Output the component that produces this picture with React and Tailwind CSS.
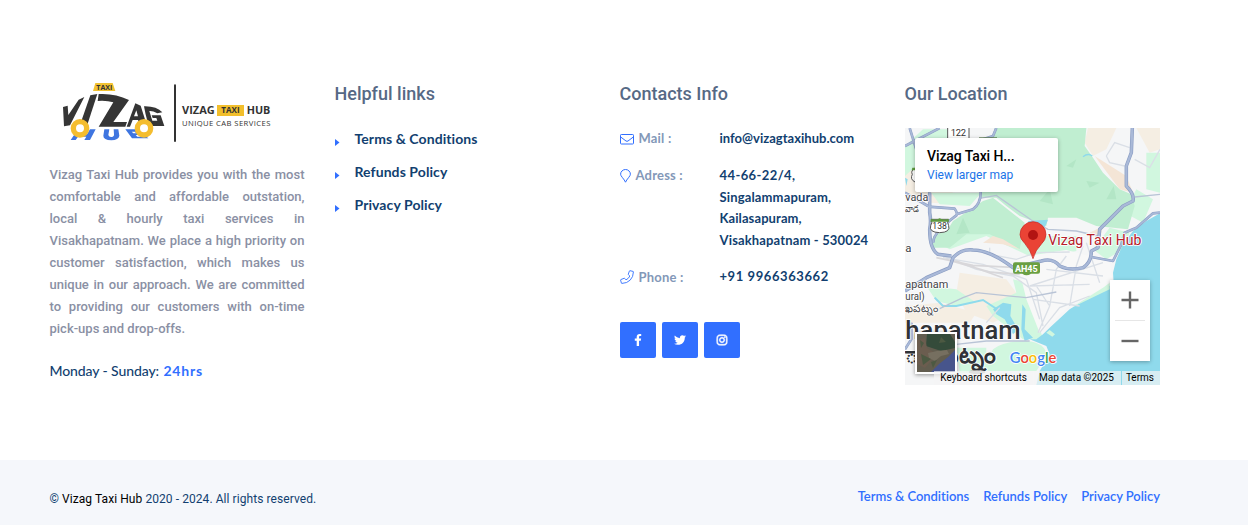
import { FaFacebookF, FaTwitter, FaInstagram } from "react-icons/fa";

function Logo() {
  return (
    <svg className="block h-[75px] w-[240px]" viewBox="0 0 720 225" role="img" aria-label="Vizag Taxi Hub">
      <g fill="#3e75e0">
        <path d="M62 195 L84 163 L98 163 L90 176 L112 176 L120 163 L137 163 L120 195 L103 195 L109 185 L84 185 L77 195Z" />
        <path d="M163 163 H178 L175 180 Q177 187 185 186 Q193 185 192 178 L191 163 H205 L208 182 Q206 195 184 196 Q160 195 160 182Z" />
        <path fillRule="evenodd" d="M226 163 H262 L295 190 H246Z M245 170 L250 175 H259 L254 170Z M257 180 L262 185 H272 L266 180Z" />
      </g>
      <g fill="#353535">
        <path d="M39 96 L53 92 L55 120 L86 74 L103 66 L60 151 L42 154Z" />
        <path d="M121 61 L142 57 L110 155 L88 155Z" />
        <path d="M146 57 Q195 54 237 75 L190 141 H231 L226 155 H146 L190 82 Q170 76 143 78Z" />
        <path fillRule="evenodd" d="M256 85 L272 92 L292 155 H273 L264 135 H248 L240 155 H230Z M259 106 L252 124 H264Z" />
        <path d="M282 94 Q320 93 337 112 L322 115 Q308 107 298 108 L307 137 H322 L319 129 H308 L305 121 H332 L343 153 H300 Q291 145 282 94Z" />
      </g>
      <circle cx="90" cy="160" r="20" fill="#fff" stroke="#f4bd2f" strokeWidth="16" />
      <circle cx="282" cy="160" r="20" fill="#fff" stroke="#f4bd2f" strokeWidth="16" />
      <path d="M136 24 H188 L196 48 H129Z" fill="#f2c230" />
      <text x="163" y="44" textAnchor="middle" textLength="48" lengthAdjust="spacingAndGlyphs" fontFamily="Open Sans" fontWeight="700" fontSize="21" fill="#333">TAXI</text>
      <rect x="372" y="28" width="6" height="173" rx="3" fill="#333" />
      <g fontFamily="Open Sans" fill="#333">
        <text x="396" y="117" textLength="98" lengthAdjust="spacingAndGlyphs" fontWeight="700" fontSize="32">VIZAG</text>
        <rect x="501" y="90" width="81" height="33" fill="#f2bf2c" />
        <text x="514" y="115" textLength="55" lengthAdjust="spacingAndGlyphs" fontWeight="700" fontSize="25">TAXI</text>
        <text x="590" y="117" textLength="71" lengthAdjust="spacingAndGlyphs" fontWeight="700" fontSize="32">HUB</text>
        <text x="396" y="153" textLength="265" fontSize="23">UNIQUE CAB SERVICES</text>
      </g>
    </svg>
  );
}

const mainRoads =
  "M80 200 V260 Q85 285 80 310 Q80 370 105 385 L145 390 M6 495 L70 455 L140 425 L150 395 Q175 368 210 372 Q260 372 330 425 L415 405 Q450 395 470 420 Q500 435 540 425 Q565 410 565 375 L585 365 L590 310 L660 240 L690 225 Q695 205 670 180 V120 L685 80 L688 6";
const sideRoads =
  "M75 242 L155 248 Q165 262 160 268 Q85 325 92 350 M160 265 L210 250 Q235 230 233 195 M20 6 L80 200 M6 60 L110 6 M240 40 L270 30 L280 6 M565 393 L630 405 L655 355 L665 320 L700 305 L750 262 L771 260 M6 670 L25 640 L25 590 M6 200 L75 240";

function MapArt() {
  return (
    <svg className="block h-[257px] w-[255px]" viewBox="6 6 765 771">
      <rect x="0" y="0" width="780" height="780" fill="#f5f6f7" />
      <g fill="#f5eee3">
        <path d="M6 110 L90 150 L150 200 L230 210 L180 235 L80 230 L6 200Z" />
        <path d="M170 440 L310 460 L370 540 L270 590 L190 560 L160 500Z" />
        <path d="M6 540 L110 530 L220 560 L200 590 L6 590Z" />
        <path d="M555 6 H640 L610 70 L570 90 L545 50Z" />
        <path d="M575 90 L670 150 L690 200 L650 190Z" fill="#f4e5d6" />
        <path d="M700 6 H771 V70 L740 80Z" />
      </g>
      <g fill="#d1f7df">
        <path d="M6 60 L60 10 H160 L120 70 L60 100 L6 150Z" />
        <path d="M85 200 H235 L200 240 L110 235Z" />
        <path d="M70 480 L160 490 L220 530 L160 540 L100 525Z" />
        <path d="M330 460 L370 470 L400 570 L420 640 L360 640 L270 570 L250 540 L340 500Z" />
        <path d="M270 670 Q300 645 370 645 Q430 650 430 690 L400 735 H240Z" />
        <path d="M160 665 H250 V740 H170Z" />
        <path d="M730 80 H771 V200 L730 190Z" />
        <path d="M620 305 L680 320 L660 370 L610 400 L570 370Z" />
        <path d="M80 340 L250 290 L380 330 L520 330 L520 375 L400 400 L250 330 L140 370Z" />
        <path d="M665 260 L700 190 L750 220 L720 290Z" />
      </g>
      <path fill="#c0eed1" d="M275 6 H550 L545 60 L570 95 L600 140 L650 190 L685 205 L695 240 L675 310 L580 300 L520 275 L435 275 L430 300 L350 270 L310 240 L280 215 L235 215 V150Z" />
      <path fill="#c0eed1" d="M90 330 L135 310 L150 285 L240 225 L270 215 L365 290 L350 370 L260 325 L190 325 L140 365 L90 365Z" />
      <path fill="#b3e6c6" d="M490 120 L520 100 L510 125Z M550 165 L590 170 L560 185Z M610 220 L632 180 L640 220Z M180 275 L200 320 L160 325Z M410 225 L440 190 L450 235Z" />
      <path fill="#f4e5d6" d="M240 350 L270 330 L300 340 L350 370 L300 355Z M560 320 L600 300 L590 340Z" />
      <path fill="#f8f8f8" d="M340 395 L490 372 L620 405 L630 470 L500 540 L410 620 L370 520Z" />

      <path fill="#8fdaec" d="M771 262 L730 285 L690 315 L660 355 L640 400 L630 440 L632 470 L600 495 L540 525 L500 550 L440 605 L420 625 L400 640 L380 640 L430 660 L440 685 L410 735 L400 777 H771Z" />
      <path fill="#d1f7df" d="M600 485 L620 470 V490 L505 545Z M440 612 L456 625 L448 632 L430 620Z" />
      <path fill="#8fdaec" d="M270 550 L300 530 L325 535 L322 570 L345 610 L330 625 L305 580 L280 565Z M358 535 L368 550 L365 610 L390 635 L365 645 L355 610Z M375 285 L435 281 L425 305 L385 305Z M6 155 L14 160 L10 180Z" />
      <path fill="none" stroke="#8fdaec" strokeWidth="6" d="M95 515 L120 540 L160 540 L240 522 L290 555" />
      <path fill="none" stroke="#8fdaec" strokeWidth="4" d="M540 92 Q555 80 568 90" />

      <g fill="none" stroke="#dadfe6" strokeWidth="4">
        <path d="M110 385 L220 430 L330 450 L400 500 L420 600 M120 395 L240 415 L370 460 M370 460 L410 580 M400 480 L440 540 M490 390 L460 430 L440 540 L405 620 M540 360 L520 420 L500 540 M430 430 L600 450 M380 480 L560 475 M390 520 L530 540 M380 480 L600 410 M410 620 L470 545 L560 510 M590 470 L550 350 M260 365 V385 L340 400 L400 380 L500 378" />
        <path d="M610 90 L635 50 L680 65 M610 90 L620 110 L665 120 M695 100 L740 125 L771 70 M250 590 L290 545" />
      </g>
      <path fill="none" stroke="#d8d7da" strokeWidth="5" d="M100 395 L210 418 L350 425 M130 400 L260 438 L350 445 M160 405 L300 455" />
      <path fill="none" stroke="#b9c4d6" strokeWidth="4" d="M230 217 L280 208 L385 282 L435 310 L520 315 L585 330 M110 548 L180 515 L220 500 L370 515 L460 498 M160 655 L250 645 L380 645 M695 213 L771 205" />
      <g fill="none" stroke="#8b9dc3" strokeLinejoin="round">
        <path strokeWidth="10.500" d={mainRoads} />
        <path strokeWidth="8" d={sideRoads} />
      </g>
      <g fill="none" stroke="#a9b9d8" strokeLinejoin="round">
        <path strokeWidth="6.500" d={mainRoads} />
        <path strokeWidth="5" d={sideRoads} />
      </g>

      <g fontFamily="Roboto" fill="#333">
        <path d="M134 0 H198 V38 H134Z" fill="#fff" stroke="#555" strokeWidth="3" />
        <text x="166" y="31" textAnchor="middle" fontSize="28" textLength="46">122</text>
        <path d="M36 126 Q22 135 28 145 Q20 160 36 168" fill="#fff" stroke="#555" strokeWidth="3" />
        <path d="M28 125 H38 V133 H26Z" fill="#5d9a3f" />
        <path d="M228 34 H282 V42 H228Z" fill="#5b7a4c" />
        <path d="M85 280 H136 Q131 289 137 299 Q143 319 110 320 Q77 319 83 299 Q89 289 85 280Z" fill="#fff" stroke="#555" strokeWidth="3" />
        <path d="M84 278 Q98 284 110 277 Q123 284 136 278 L138 287 H82Z" fill="#5d9a3f" />
        <text x="110" y="309" textAnchor="middle" fontSize="26">138</text>
        <path d="M336 409 H405 Q411 409 411 415 V437 Q411 443 405 443 H384 Q370 452 358 443 H336 Q330 443 330 437 V415 Q330 409 336 409Z" fill="#6a9f42" />
        <text x="370" y="439" textAnchor="middle" fontSize="27" fontWeight="700" fill="#fff" textLength="68">AH45</text>
      </g>
      <g fontFamily="Roboto, 'Noto Sans', sans-serif" fill="#3f4347" stroke="#fff" strokeWidth="5" paintOrder="stroke" strokeLinejoin="round">
        <text x="7" y="224" fontSize="33" textLength="69" lengthAdjust="spacingAndGlyphs">vada</text>
        <text x="7" y="257" fontSize="30" textLength="40" lengthAdjust="spacingAndGlyphs">వాడ</text>
        <text x="7" y="378" fontSize="34">a</text>
        <text x="7" y="486" fontSize="34" textLength="129" lengthAdjust="spacingAndGlyphs">apatnam</text>
        <text x="7" y="522" fontSize="34" textLength="58" lengthAdjust="spacingAndGlyphs">ural)</text>
        <text x="7" y="557" fontSize="31" textLength="98" lengthAdjust="spacingAndGlyphs">ఖపట్నం</text>
        <g fill="#303338">
          <text x="7" y="638" fontSize="76" fontWeight="500" textLength="346" lengthAdjust="spacingAndGlyphs">hapatnam</text>
          <text x="7" y="712" fontSize="70" fontWeight="700" textLength="272" lengthAdjust="spacingAndGlyphs">ాఖపట్నం</text>
        </g>
      </g>
      <ellipse cx="222" cy="738" rx="25" ry="6" fill="#aaa" />
      <path d="M390 398 Q382 371 365 352 Q351 338 351 326 A38.5 38.5 0 0 1 429 326 Q428 342 416 353 Q396 374 390 398Z" fill="#ea4335" stroke="#c5221f" strokeWidth="2" />
      <circle cx="390" cy="327" r="15" fill="#b31412" />
      <text x="436" y="357" textLength="279" lengthAdjust="spacingAndGlyphs" fontFamily="Roboto" fontSize="42" fill="#b5202a" stroke="#fff" strokeWidth="5" paintOrder="stroke" strokeLinejoin="round">Vizag Taxi Hub</text>
      <text x="320" y="712" textLength="140" lengthAdjust="spacingAndGlyphs" fontFamily="Lato" fontWeight="600" fontSize="48" stroke="#fff" strokeWidth="5" paintOrder="stroke" strokeLinejoin="round">
        <tspan fill="#4285f4">G</tspan><tspan fill="#ea4335">o</tspan><tspan fill="#fbbc04">o</tspan><tspan fill="#4285f4">g</tspan><tspan fill="#34a853">l</tspan><tspan fill="#ea4335">e</tspan>
      </text>
    </svg>
  );
}

function LocationMap() {
  return (
    <div className="relative h-[257px] w-[255px] overflow-hidden font-['Roboto',sans-serif]">
      <MapArt />
      <div className="absolute left-[10px] top-[10px] h-[54px] w-[143px] rounded-[2px] bg-white px-3 pt-[10px] shadow-[0_1px_4px_rgba(0,0,0,0.3)]">
        <div className="text-[14px] font-medium leading-[17px] tracking-[-0.1px] text-black">Vizag Taxi H...</div>
        <div className="mt-[2px] text-[12px] leading-[16px] text-[#1a73e8]">View larger map</div>
      </div>
      <div className="absolute bottom-[11px] left-[10px] size-[42px] border-2 border-white shadow-[0_1px_4px_rgba(0,0,0,0.4)]">
        <svg className="block size-full" viewBox="0 0 38 38">
          <rect width="38" height="38" fill="#625d4f" />
          <path d="M10 0 H33 L38 8 V14 L24 17 L9 12Z" fill="#344b3a" />
          <path d="M0 6 L8 4 L10 14 L20 20 L8 34 L0 30Z" fill="#6b5d4f" />
          <path d="M11 19 L20 17 L30 16 L32 20 L24 22 L18 27 L12 24Z" fill="#766f60" />
          <path d="M4 20 L14 25 L6 31Z M24 3 L29 8 L22 9Z M14 28 L20 26 L16 34Z M3 6 L7 9 L4 14Z" fill="#4c5942" />
          <path d="M38 16 L31 23 L22 30 L14 38 H38Z" fill="#47558c" />
        </svg>
      </div>
      <div className="absolute right-[10px] top-[152px] flex h-[81px] w-10 flex-col items-center bg-white shadow-[0_1px_4px_rgba(0,0,0,0.3)]">
        <svg className="h-10 w-10" viewBox="0 0 40 40" stroke="#666" strokeWidth="2.4"><path d="M11.500 20 H28.500 M20 11.500 V28.500" /></svg>
        <div className="h-px w-[30px] bg-[#e6e6e6]" />
        <svg className="h-10 w-10" viewBox="0 0 40 40" stroke="#666" strokeWidth="2.4"><path d="M11.500 20 H28.500" /></svg>
      </div>
      <div className="absolute bottom-0 right-0 flex h-[14px] gap-px text-[10px] leading-[14px] text-black">
        <span className="bg-[#f5f5f5]/70 px-[6px]">Keyboard shortcuts</span>
        <span className="bg-[#f5f5f5]/70 pl-[5px] pr-[7px]">Map data ©2025</span>
        <span className="bg-[#f5f5f5]/70 pl-1 pr-[6px]">Terms</span>
      </div>
    </div>
  );
}

function Heading({ children }) {
  return <h3 className="font-['Roboto',sans-serif] text-[18px] font-medium leading-6 text-[#566985]">{children}</h3>;
}

function MailIcon() {
  return (
    <svg className="h-[11px] w-[14px]" viewBox="0 0 14 11" fill="none" stroke="#316fff" strokeWidth="1">
      <rect x=".5" y=".5" width="13" height="9.500" rx=".8" />
      <path d="M.7 3 L6 7 Q7 7.600 8 7 L13.300 3" />
    </svg>
  );
}

function PinIcon() {
  return (
    <svg className="h-[14px] w-[11px]" viewBox="0 0 11 14" fill="none" stroke="#316fff" strokeWidth="1">
      <path d="M5.500 13.200 Q4.500 11 2.500 8.700 Q.6 6.500 .6 5.200 A4.900 4.700 0 0 1 10.400 5.200 Q10.400 6.500 8.500 8.700 Q6.500 11 5.500 13.200Z" />
    </svg>
  );
}

function PhoneIcon() {
  return (
    <svg className="h-[14px] w-[14px]" viewBox="0 0 14 14" fill="none" stroke="#316fff" strokeWidth=".9" strokeLinejoin="round">
      <path d="M10 .7 L13 1.400 Q13.500 1.500 13.400 2 Q13.300 7 10.200 10.100 Q7 13.300 2 13.400 Q1.500 13.500 1.400 13 L.6 10.200 Q.5 9.700 1 9.500 L4.100 8.300 Q4.500 8.200 4.800 8.500 L6 9.900 Q8.600 8.600 9.900 6 L8.500 4.800 Q8.200 4.500 8.300 4.100 L9.400 1.100 Q9.600 .6 10 .7Z" />
    </svg>
  );
}

const contacts = [
  { label: "Mail :", Icon: MailIcon, lines: [["info@vizagtaxihub.com", "tracking-[0.02px]"]] },
  {
    label: "Adress :",
    Icon: PinIcon,
    lines: [
      ["44-66-22/4,", "tracking-[0.4px]"],
      ["Singalammapuram,", "tracking-[0.15px]"],
      ["Kailasapuram,", "tracking-[0.1px]"],
      ["Visakhapatnam - 530024", "tracking-[0.15px]"],
    ],
  },
  { label: "Phone :", Icon: PhoneIcon, lines: [["+91 9966363662", "tracking-[0.58px]"]] },
];

export default function App() {
  return (
    <div className="flex h-[525px] w-full flex-col overflow-hidden bg-white font-['Roboto',sans-serif]">
      <main className="grid h-[460px] shrink-0 grid-cols-[255px_255px_255px_255px] gap-[30px] pl-[49.500px]">
        <section className="pt-[75px]">
          <Logo />
          <p className="mt-[14px] text-justify text-[13px] font-medium leading-[22px] text-[#8a90a4]">
            Vizag Taxi Hub provides you with the most comfortable and affordable outstation, local &amp; hourly taxi services in Visakhapatnam. We place a high priority on customer satisfaction, which makes us unique in our approach. We are committed to providing our customers with on-time pick-ups and drop-offs.
          </p>
          <p className="mt-5 font-['Lato',sans-serif] text-[14px] font-medium leading-[22px] tracking-[-0.1px] text-[#123f70]">
            Monday - Sunday: <span className="ml-px font-bold tracking-[0.8px] text-[#316fff]">24hrs</span>
          </p>
        </section>

        <section className="pt-[82px]">
          <Heading>Helpful links</Heading>
          <ul className="mt-4 font-['Lato',sans-serif] text-[14px] font-bold tracking-[0.08px] text-[#123f70]">
            {["Terms & Conditions", "Refunds Policy", "Privacy Policy"].map((t) => (
              <li key={t} className="flex h-[33px] items-center">
                <svg className="mt-[7px] h-[7px] w-5" viewBox="0 0 20 7"><path d="M0 0 L4.500 3.500 L0 7Z" fill="#316fff" /></svg>
                {t}
              </li>
            ))}
          </ul>
        </section>

        <section className="pt-[82px]">
          <Heading>Contacts Info</Heading>
          <dl className="mt-[22px] flex flex-col gap-[15px] font-['Lato',sans-serif] text-[13px] font-bold leading-[21.600px]">
            {contacts.map(({ label, Icon, lines }) => (
              <div key={label} className="flex">
                <dt className="flex h-[22px] w-[100px] items-center gap-[5px] tracking-[0.2px] text-[#8398b8]">
                  <Icon />
                  {label}
                </dt>
                <dd className="whitespace-nowrap text-[#123f70]">
                  {lines.map(([line, track]) => <div key={line} className={track}>{line}</div>)}
                </dd>
              </div>
            ))}
          </dl>
          <div className="ml-[0.500px] mt-[34px] flex gap-[6px]">
            {[FaFacebookF, FaTwitter, FaInstagram].map((Icon, i) => (
              <a key={i} className="flex size-9 items-center justify-center rounded-[2px] bg-[#316fff] text-[12px] text-white">
                <Icon stroke="currentColor" strokeWidth={i === 2 ? 24 : 0} />
              </a>
            ))}
          </div>
        </section>

        <section className="pt-[82px]">
          <Heading>Our Location</Heading>
          <div className="ml-[0.500px] mt-[22px]"><LocationMap /></div>
        </section>
      </main>

      <footer className="flex h-[65px] shrink-0 items-center justify-between bg-[#f5f7fb] pl-[49.500px] pr-[88px]">
        <p className="mt-3 text-[12px] leading-5 tracking-[0.07px] text-[#123f70]">
          © <span className="text-black">Vizag Taxi Hub</span> 2020 - 2024. All rights reserved.
        </p>
        <nav className="mt-[6px] flex gap-[14px] font-['Lato',sans-serif] text-[13px] font-semibold leading-5 tracking-[-0.04px] text-[#316fff]">
          <a>Terms &amp; Conditions</a>
          <a>Refunds Policy</a>
          <a>Privacy Policy</a>
        </nav>
      </footer>
    </div>
  );
}
